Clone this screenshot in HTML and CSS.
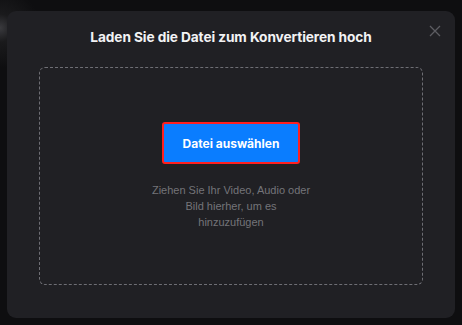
FILE: index.html
```html
<!DOCTYPE html>
<html lang="de">
<head>
<meta charset="utf-8">
<link rel="stylesheet" href="styles.css">
</head>
<body>
<div class="modal">
  <button class="close" aria-label="Schließen">
    <svg width="12" height="12" viewBox="0 0 12 12"><path d="M1 1L11 11M11 1L1 11" stroke="#5c5c62" stroke-width="1.3" fill="none"/></svg>
  </button>
  <h1 class="title">Laden Sie die Datei zum Konvertieren hoch</h1>
  <div class="drop">
    <button class="pick">Datei auswählen</button>
    <p class="hint">Ziehen Sie Ihr Video, Audio oder Bild hierher, um es<br>hinzuzufügen</p>
  </div>
</div>
</body>
</html>
```
FILE: styles.css
```css
html, body {
  margin: 0;
  height: 100%;
}
body {
  background: radial-gradient(circle at 0px 28px, #3a3a3e 0, #1a1a1c 14px, rgba(14,14,16,0) 40px), #0e0e10;
  font-family: Inter, "Noto Sans", sans-serif;
  padding: 11px 7px 7px 7px;
  box-sizing: border-box;
}
.modal {
  position: relative;
  background: #202024;
  border-radius: 9px;
  height: 307px;
  box-sizing: border-box;
  padding: 15px 32px 33px 32px;
  display: flex;
  flex-direction: column;
}
.close {
  position: absolute;
  top: 14px;
  right: 14px;
  background: none;
  border: 0;
  padding: 0;
  width: 12px;
  height: 12px;
  display: flex;
}
.title {
  margin: 0;
  color: #f2f2f4;
  font-size: 13.7px;
  font-weight: 700;
  line-height: 22px;
  text-align: center;
  letter-spacing: -0.1px;
}
.drop {
  margin-top: 19px;
  flex: 1;
  border: 1px dashed #6e6e74;
  border-radius: 6px;
  display: flex;
  flex-direction: column;
  align-items: center;
  justify-content: center;
  padding-bottom: 0;
}
.pick {
  width: 138px;
  height: 42px;
  background: #0a7dff;
  border: 2px solid #ff1f1f;
  border-radius: 3px;
  color: #ffffff;
  font-family: Inter, "Noto Sans", sans-serif;
  font-size: 12px;
  font-weight: 700;
  cursor: pointer;
}
.hint {
  margin: 18px 0 0 0;
  max-width: 175px;
  text-align: center;
  color: #747479;
  font-family: "Liberation Sans", Arial, sans-serif;
  font-size: 11px;
  line-height: 16px;
}
```
